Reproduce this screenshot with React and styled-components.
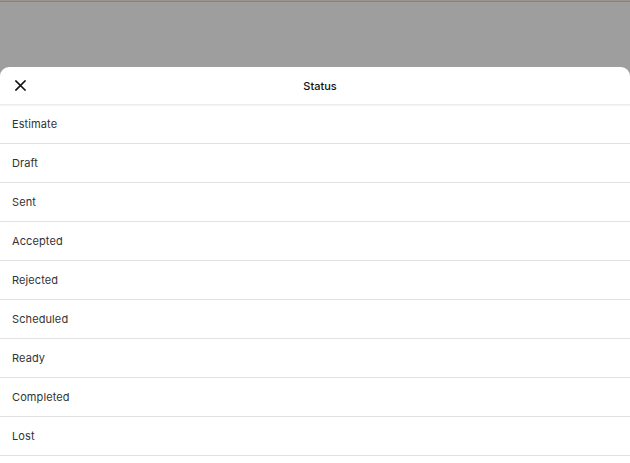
import styled, { createGlobalStyle } from 'styled-components'

const GlobalStyle = createGlobalStyle`
  html, body {
    margin: 0;
    padding: 0;
    background: #9e9e9e;
  }
  body {
    font-family: Inter, "Noto Sans", "Liberation Sans", sans-serif;
    -webkit-font-smoothing: antialiased;
  }
`

// dimmed page behind the sheet
const Backdrop = styled.div`
  height: 67px;
  background: #9e9e9e;
  border-top: 1px solid #9a938e;
  box-shadow: inset 0 1px 0 #86817d;
  box-sizing: border-box;
`

const Sheet = styled.div`
  background: #ffffff;
  border-radius: 9px 9px 0 0;
  min-height: 396px;
`

const Header = styled.div`
  display: grid;
  grid-template-columns: 40px 1fr 30px;
  align-items: center;
  height: 37px;
  border-bottom: 1px solid #ececec;
  box-shadow: 0 1px 0 #f4f4f4;
`

const CloseBtn = styled.button`
  display: flex;
  align-items: center;
  justify-content: center;
  width: 40px;
  height: 37px;
  padding: 0 0 0 1px;
  border: 0;
  background: none;
  cursor: pointer;
`

const Title = styled.div`
  text-align: center;
  font-size: 11px;
  font-weight: 500;
  color: #111111;
`

const List = styled.ul`
  list-style: none;
  margin: 0;
  padding: 0;
`

const Item = styled.li`
  display: flex;
  align-items: center;
  height: 38px;
  padding: 0 12px;
  border-bottom: 1px solid #e2e2e2;
  font-size: 11px;
  color: #333333;
  letter-spacing: 0.1px;
`

const statuses = [
  'Estimate',
  'Draft',
  'Sent',
  'Accepted',
  'Rejected',
  'Scheduled',
  'Ready',
  'Completed',
  'Lost',
]

export default function App() {
  return (
    <>
      <GlobalStyle />
      <Backdrop />
      <Sheet>
        <Header>
          <CloseBtn aria-label="Close">
            <svg width="11" height="11" viewBox="0 0 11 11" fill="none">
              <path d="M1 1L10 10M10 1L1 10" stroke="#111" strokeWidth="1.6" strokeLinecap="square" />
            </svg>
          </CloseBtn>
          <Title>Status</Title>
          <span />
        </Header>
        <List>
          {statuses.map(s => (
            <Item key={s}>{s}</Item>
          ))}
        </List>
      </Sheet>
    </>
  )
}
